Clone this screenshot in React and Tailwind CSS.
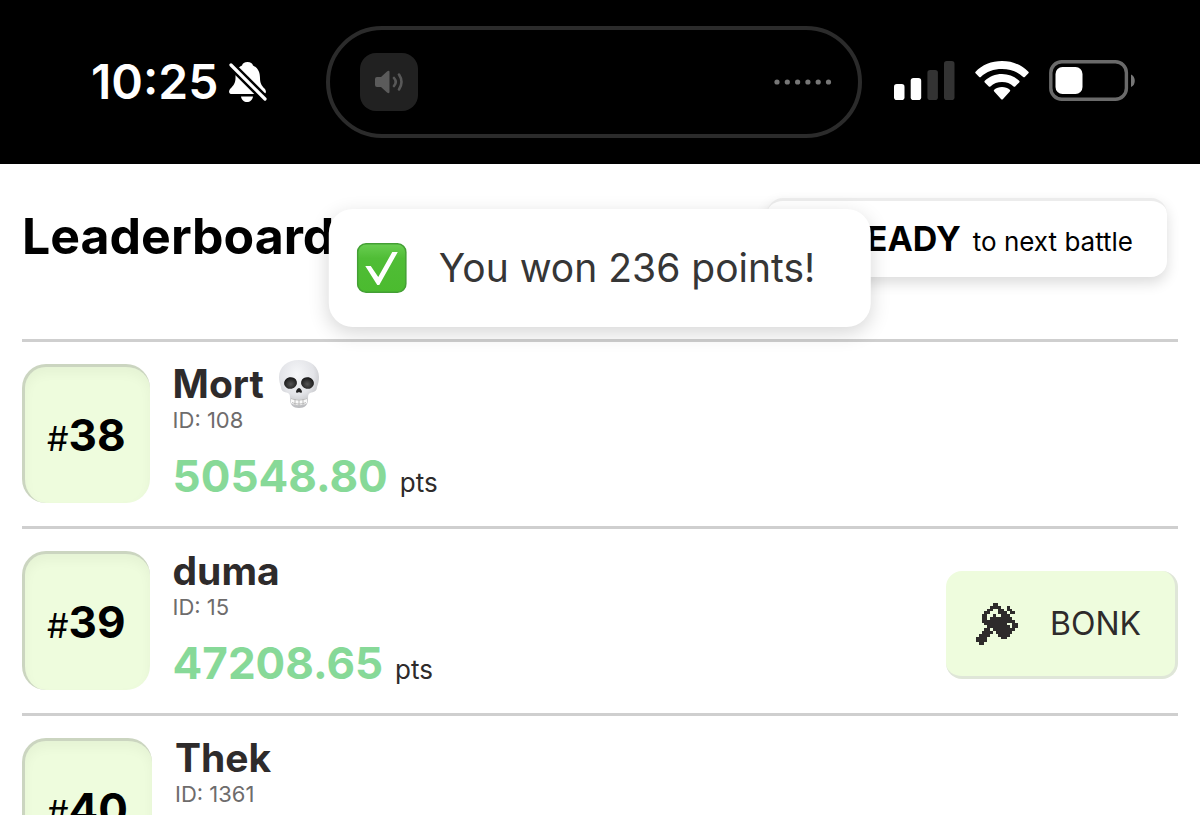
const players = [
	{ rank: 38, name: "Mort", id: 108, points: "50548.80", dead: true, canBonk: false },
	{ rank: 39, name: "duma", id: 15, points: "47208.65", dead: false, canBonk: true },
	{ rank: 40, name: "Thek", id: 1361, points: null, dead: false, canBonk: false }
];

const hammerPixels = [
	"......##.......",
	".....####..#...",
	"....##..##.##..",
	"...##...###.##.",
	"..##..#..###...",
	"..##.########..",
	"..############.",
	"...########..##",
	"....########.##",
	"...##.########.",
	"..####.######..",
	".####...####...",
	"####.....##....",
	"####...........",
	".##............"
];

const hammerPath = hammerPixels.flatMap((row, y) => [...row].map((cell, x) => (
	cell === "#" ? `M${x} ${y}h1v1h-1Z` : ""
))).join("");

const HammerIcon = () => (
	<svg width="42" height="42" viewBox="0 0 15 15" shapeRendering="crispEdges" aria-hidden="true">
		<path d={hammerPath} fill="#2e2b2b" />
	</svg>
);

const SkullIcon = () => (
	<svg width="42" height="50" viewBox="0 0 42 50" role="img" aria-label="skull">
		<defs>
			<radialGradient id="bone" cx="45%" cy="30%" r="70%">
				<stop offset="0" stopColor="#f6f7f9" />
				<stop offset="0.6" stopColor="#e3e4e8" />
				<stop offset="1" stopColor="#b9babd" />
			</radialGradient>
			<radialGradient id="socket" cx="50%" cy="60%" r="60%">
				<stop offset="0" stopColor="#555" />
				<stop offset="1" stopColor="#151515" />
			</radialGradient>
		</defs>
		<path d="M21 1C9 1 1 8 1 18c0 4 1 7 2 10 0 4 3 5 7 6 2 1 2 3 2 6 0 6 3 9 9 9s9-3 9-9c0-3 0-5 2-6 4-1 7-2 7-6 1-3 2-6 2-10C41 8 33 1 21 1Z" fill="url(#bone)" />
		<ellipse cx="12.500" cy="24" rx="6.500" ry="5.800" transform="rotate(-12 12.500 24)" fill="url(#socket)" />
		<ellipse cx="29.500" cy="24" rx="6.500" ry="5.800" transform="rotate(12 29.500 24)" fill="url(#socket)" />
		<path d="M21 29c-1.500 0-3 2.500-3 4 0 1 2 1 3 0 1 1 3 1 3 0 0-1.500-1.500-4-3-4Z" fill="#222" />
		<path d="M13 39c5 2 11 2 16 0v5c-4 3-12 3-16 0Z" fill="#fafafa" />
		<path d="M13 39.500c5 2 11 2 16 0M14 43.500c4 2 10 2 14 0M17 40v6M21 41v6M25 40v6" fill="none" stroke="#b4b4b4" strokeWidth="0.900" />
	</svg>
);

const CheckIcon = () => (
	<svg width="50" height="50" viewBox="0 0 50 50" role="img" aria-label="Success">
		<defs>
			<linearGradient id="green" x1="0" y1="0" x2="0" y2="1">
				<stop offset="0" stopColor="#6ace52" />
				<stop offset="0.300" stopColor="#50bd36" />
				<stop offset="1" stopColor="#4bbb2f" />
			</linearGradient>
		</defs>
		<rect x="0.800" y="0.800" width="48.400" height="48.400" rx="8.500" fill="url(#green)" stroke="#449f35" strokeWidth="1.600" />
		<path d="M8.500 23h5.500l7.500 11L35.500 9h5.500L22.500 42h-2Z" fill="#fff" />
	</svg>
);

const MutedBellIcon = () => (
	<svg width="40" height="42" viewBox="0 0 40 42" role="img" aria-label="Silent mode">
		<path d="M19.500 1c-3 0-5 1.500-5.500 3.500C8.500 7 7.500 12 7.500 17c0 5-2 7.500-5 10.500C0 30.500 1 33 4 33h31c3 0 4-2.500 1.500-5.500-3-3-4.500-5.500-4.500-10.500 0-5-1.500-10-7-12.500C24.500 2.500 22.500 1 19.500 1Z" fill="#fff" />
		<path d="M13 35.500h12c-.5 3.500-3 5.500-6 5.500s-5.500-2-6-5.500Z" fill="#fff" />
		<path d="M0 1l38 38" stroke="#000" strokeWidth="8" />
		<path d="M3 4l34 34" stroke="#fff" strokeWidth="3.200" strokeLinecap="round" />
	</svg>
);

const SpeakerIcon = () => (
	<svg width="28" height="24" viewBox="0 0 28 24" fill="none" aria-hidden="true">
		<path d="M0 9q0-2 2-2h4l6-5.500q2.500-1.500 2.500 .5v20q0 2-2.500 .5L6 17H2q-2 0-2-2Z" fill="#5b5b5b" />
		<path d="M19 8q3.500 4 0 8M24 4.500q5 7.500 0 15" stroke="#585858" strokeWidth="2.600" strokeLinecap="round" />
	</svg>
);

const SignalIcon = () => (
	<svg width="61" height="39" viewBox="0 0 61 39" role="img" aria-label="Signal strength">
		<rect x="0" y="23" width="10.500" height="16" rx="2.800" fill="#fff" />
		<rect x="16.700" y="17" width="10.500" height="22" rx="2.800" fill="#fff" />
		<rect x="33.400" y="9" width="10.500" height="30" rx="2.800" fill="#333" />
		<rect x="50" y="0" width="10.500" height="39" rx="2.800" fill="#333" />
	</svg>
);

const WifiIcon = () => (
	<svg width="54" height="39" viewBox="0 0 54 39" fill="#fff" role="img" aria-label="Wi-Fi">
		<path d="M27 0C16.500 0 7 4 .6 10.700q-.8.800 0 1.600l3.600 3.600q.8.800 1.600 0C11.500 10.600 18.800 8 27 8s15.500 2.600 21.200 7.900q.8.800 1.600 0l3.600-3.600q.8-.8 0-1.600C47 4 37.500 0 27 0Z" />
		<path d="M27 13c-6.700 0-12.700 2.500-17.200 6.800q-.8.800 0 1.600l4 4q.8.800 1.600 0C18.600 22.500 22.500 21 27 21s8.400 1.500 11.600 4.400q.8.800 1.600 0l4-4q.8-.8 0-1.600C39.700 15.500 33.700 13 27 13Z" />
		<path d="M27 26c-3 0-5.700 1-7.800 2.700q-1 .8 0 1.700l7 7.800q.8.800 1.600 0l7-7.800q1-.9 0-1.700C32.700 27 30 26 27 26Z" />
	</svg>
);

const BatteryIcon = () => (
	<svg width="87" height="41" viewBox="0 0 87 41" role="img" aria-label="Battery">
		<rect x="1.800" y="1.800" width="75.600" height="37.400" rx="11" fill="none" stroke="#6a6a6a" strokeWidth="3.400" />
		<rect x="6.500" y="7" width="27" height="27" rx="7" fill="#fff" />
		<path d="M82 14.500c5 1.500 5 11 0 12.500Z" fill="#777" />
	</svg>
);

const StatusBar = () => (
	<header className="flex h-[164px] items-center bg-black pr-16 pl-[91px]">
		<div className="flex flex-1 items-center gap-2.5 text-white">
			<time className="text-5xl font-semibold">10:25</time>
			<MutedBellIcon />
		</div>
		<div className="mr-8 flex h-28 w-[536px] items-center justify-between rounded-full border-4 border-[#2b2b2b] pr-[26px] pl-[30px]">
			<div className="flex size-[58px] items-center justify-center rounded-2xl bg-[#212121]">
				<SpeakerIcon />
			</div>
			<svg width="58" height="6" viewBox="0 0 58 6" fill="#777" aria-hidden="true">
				{[0, 1, 2, 3, 4, 5].map((dot) => <circle key={dot} cx={3 + (dot * 10.3)} cy="3" r="2.600" />)}
			</svg>
		</div>
		<div className="flex items-center gap-5 pb-1">
			<SignalIcon />
			<WifiIcon />
			<BatteryIcon />
		</div>
	</header>
);

const Toast = ({ children }) => (
	<div
		role="status"
		className="absolute top-[209px] left-1/2 flex h-[118px] -translate-x-1/2 items-center gap-8 rounded-3xl bg-white pr-14 pl-7 text-[39px] whitespace-nowrap text-[#363636] shadow-[0_6px_20px_rgba(0,0,0,0.16)]"
	>
		<CheckIcon />
		{children}
	</div>
);

const Player = ({ rank, name, id, points, dead, canBonk }) => (
	<li className="flex items-start gap-[23px] border-t-3 border-[#cfcfcf] pt-[22px] pb-[23px]">
		<div className="flex h-[139px] items-center rounded-3xl border-t-3 border-l-3 border-[#cbd5c0] bg-[#eefcdd] pr-6 pl-[22px] text-black shadow-[inset_0_6px_12px_rgba(0,0,0,0.04)]">
			<p className="text-[44px] font-bold">
				<span className="text-[34px] font-normal">#</span>
				{rank}
			</p>
		</div>
		<div className="flex-1 text-[#2e2b2b]">
			<div className="flex h-10 items-center gap-3.5">
				<h2 className="text-[39px] font-bold">{name}</h2>
				{dead && <SkullIcon />}
			</div>
			<p className="text-[22px] leading-8 text-[#6e6c6c]">
				ID:
				{" "}
				{id}
			</p>
			{points && (
				<p className="mt-4 flex items-baseline gap-3 text-[26px] leading-8">
					<strong className="text-[44px] leading-12 font-bold text-[#87d998]">{points}</strong>
					pts
				</p>
			)}
		</div>
		{canBonk && (
			<button
				type="button"
				className="mt-5 flex h-[108px] items-center gap-8 rounded-2xl border-r-3 border-b-3 border-[#dfe6d8] bg-[#eefcdd] pr-[34px] pl-[30px] text-[32px] text-[#2e2b2b]"
			>
				<HammerIcon />
				BONK
			</button>
		)}
	</li>
);

const App = () => (
	<div className="relative h-screen overflow-hidden bg-white font-[Inter,sans-serif]">
		<StatusBar />
		<main className="px-[22px]">
			<div className="flex h-[175px] items-start justify-between pt-[34px] pr-[11px]">
				<h1 className="text-[50px] leading-[76px] font-bold text-black">Leaderboard</h1>
				<p className="flex h-[79px] min-w-[400px] items-baseline justify-end gap-3 rounded-2xl border-t-3 border-[#ececec] bg-white px-[34px] pt-3 text-[26px] text-black shadow-[0_6px_14px_rgba(0,0,0,0.14)]">
					<strong className="text-[34px] font-bold">READY</strong>
					to next battle
				</p>
			</div>
			<ul>
				{players.map((player) => <Player key={player.id} {...player} />)}
			</ul>
		</main>
		<Toast>You won 236 points!</Toast>
	</div>
);

export default App;
